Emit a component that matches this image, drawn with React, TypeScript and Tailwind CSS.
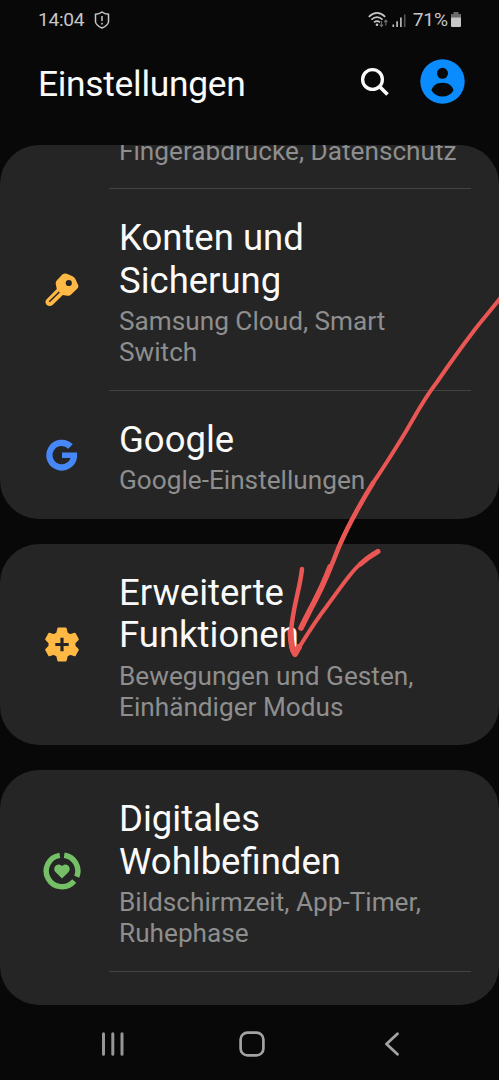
import type { ReactNode } from "react";

type RowProps = {
  icon?: ReactNode;
  title?: string[];
  summary: string[];
  divider?: boolean;
};

function KeyIcon() {
  return (
    <svg width="34" height="34" viewBox="0 0 34 34">
      <path
        fill="#ffb944"
        fillRule="evenodd"
        d="M17.6 1.3Q19.6-.1 21.8.7L27.500 3.300Q29.500 4.300 30.500 6.300L33 11.700Q34 14 32.400 15.600L26.400 21.300Q24.600 23.200 22.200 22.700L17.800 22.100L7.600 31.900C3.900 35.300-1.600 30.400 1.200 26.700L11.800 15.900L10.800 11.300Q10.300 9 11.900 7.200ZM23.800 6.900a3.100 3.100 0 1 0 0 6.200a3.100 3.100 0 1 0 0-6.200Z"
      />
      <path d="M14.300 19L4.300 28.800" stroke="#252525" strokeWidth="1.500" />
    </svg>
  );
}

function GoogleIcon() {
  return (
    <svg width="32" height="32" viewBox="0 0 32 32" fill="none" stroke="#4788f8" strokeWidth="6.300">
      <path d="M24.500 7.500A12.300 12.300 0 1 0 28 17.200" />
      <path d="M16 16.200H31.100" strokeWidth="5.600" />
    </svg>
  );
}

function GearPlusIcon() {
  return (
    <svg width="34" height="35" viewBox="0 0 34 35">
      <path
        fill="#ffb944"
        stroke="#ffb944"
        strokeWidth="2"
        strokeLinejoin="round"
        d="M13.400 1.500h7.200l1.200 4.800l3.300 1.900l4.700-1.400l3 5.500l-3.300 3.400v3.600l3.300 3.400l-3 5.500l-4.700-1.400l-3.300 1.900l-1.200 4.800h-7.200l-1.200-4.800l-3.300-1.900l-4.700 1.400l-3-5.500l3.300-3.400v-3.600l-3.300-3.400l3-5.500l4.700 1.400l3.300-1.900Z"
      />
      <path d="M17 10.800v13.400M10.300 17.500h13.400" stroke="#252525" strokeWidth="3.200" />
    </svg>
  );
}

function WellbeingIcon() {
  return (
    <svg width="38" height="38" viewBox="0 0 38 38" fill="none">
      <path
        d="M16.800 3.300A15.800 15.800 0 1 0 31.200 29M21.200 3.300A15.800 15.800 0 0 1 33.800 24.700"
        stroke="#75bf66"
        strokeWidth="5.400"
      />
      <path
        fill="#75bf66"
        d="M19 26.600L12.400 20C8.800 15.700 14.500 9.700 19 14.200C23.500 9.700 29.200 15.700 25.600 20Z"
      />
    </svg>
  );
}

function Row({ icon, title = [], summary, divider }: RowProps) {
  return (
    <div>
      <div className="flex items-center">
        <div className="flex w-[119px] shrink-0 justify-center pl-[5px]">{icon}</div>
        <div className="pt-7 pb-[22.5px] whitespace-nowrap">
          {title.length > 0 && (
            <h2 className="mb-1 text-[36.5px] leading-[42.5px] text-[#fafafa]">
              {title.map((line) => (
                <span key={line} className="block">{line}</span>
              ))}
            </h2>
          )}
          <p className="text-[26.2px] leading-[31px] text-[#8e8e8e]">
            {summary.map((line) => (
              <span key={line} className="block">{line}</span>
            ))}
          </p>
        </div>
      </div>
      {divider && <div className="mr-7 -mt-px ml-[109px] h-px bg-[#434343]" />}
    </div>
  );
}

function Card({ children }: { children: ReactNode }) {
  return <section className="shrink-0 overflow-hidden rounded-[39px] bg-[#252525]">{children}</section>;
}

function StatusBar() {
  return (
    <div className="flex h-10 items-center justify-between px-[38px] text-[19.2px] text-[#c6c6c6]">
      <div className="flex items-center gap-[10px]">
        <span className="tracking-[-0.3px]">14:04</span>
        <svg width="16" height="18" viewBox="0 0 16 18" fill="none" stroke="currentColor" strokeWidth="1.500">
          <path d="M8 1C6 2.500 3.800 3.100 1.500 3.300V11C2 14 5 15.700 8 17C11 15.700 14 14 14.500 11V3.300C12.200 3.100 10 2.500 8 1Z" />
          <path d="M8 5v5M8 11.800v1.700" />
        </svg>
      </div>
      <div className="flex items-center">
        <svg width="38" height="18" viewBox="0 0 38 18" fill="none" stroke="currentColor" strokeWidth="1.600">
          <path d="M.8 5.800Q9-1.900 17.200 5.800M3.400 8.700Q9 3.600 14.600 8.700M6 11.300Q9 8.800 12 11.300" />
          <circle cx="9" cy="13.800" r="1.300" fill="currentColor" stroke="none" />
          <path d="M13.500 10v5.500M11.900 13.700l1.600 1.800l1.600-1.800M17.800 14.500V9.300M16.200 11l1.600-1.800l1.600 1.800" stroke="#6b6b6b" strokeWidth="1.200" />
          <path d="M25.300 13.500V16M29.100 10.300V16M32.900 6.500V16" />
          <path d="M36.700 3.500V16" stroke="#555" />
        </svg>
        <span className="ml-[7px] tracking-[-0.1px]">71%</span>
        <svg className="ml-[3px]" width="10" height="16" viewBox="0 0 10 16">
          <path fill="#6b6b6b" d="M2.500 0h5v2H10v5H0V2h2.500Z" />
          <path fill="#c6c6c6" d="M0 5.500h10V14q0 1-1 1H1q-1 0-1-1Z" />
        </svg>
      </div>
    </div>
  );
}

function Header() {
  return (
    <header className="flex h-[104.5px] items-start pr-[34px] pl-[38px]">
      <h1 className="mt-[23px] grow text-[35.4px] leading-[42px] tracking-[-0.3px] text-[#fafafa]">
        Einstellungen
      </h1>
      <svg className="mt-[27px]" width="30" height="30" viewBox="0 0 30 30" fill="none" stroke="#fafafa">
        <circle cx="12.500" cy="12.500" r="9.900" strokeWidth="3.300" />
        <path d="M19.500 19.500L27.500 27.500" strokeWidth="3.800" />
      </svg>
      <svg className="mt-[19px] ml-[30px]" width="45" height="45" viewBox="0 0 45 45" fill="#080808">
        <circle cx="22.500" cy="22.500" r="22.200" fill="#0a8cff" />
        <circle cx="22.500" cy="14.300" r="5.500" />
        <path d="M11.500 31.500C12.500 26.500 17 23.800 22.500 23.800S32.500 26.500 33.500 31.500C31 35.500 27 37.600 22.500 37.600S14 35.500 11.500 31.500Z" />
      </svg>
    </header>
  );
}

function NavBar() {
  return (
    <nav className="flex h-[75px] shrink-0 items-center pt-0.5 pl-[101px]">
      <svg width="24" height="24" viewBox="0 0 24 24" stroke="#969696" strokeWidth="3" strokeLinecap="round">
        <path d="M2.500 1.800V22.200M11.800 1.800V22.200M21 1.800V22.200" />
      </svg>
      <svg className="ml-[114px]" width="26" height="26" viewBox="0 0 26 26" fill="none" stroke="#a3a3a3" strokeWidth="2.700">
        <rect x="1.600" y="1.600" width="22.800" height="22.800" rx="7" />
      </svg>
      <svg className="ml-[119px]" width="16" height="24" viewBox="0 0 16 24" fill="none" stroke="#a3a3a3" strokeWidth="2.800" strokeLinecap="round" strokeLinejoin="round">
        <path d="M13.500 1.800L2.500 12L13.500 22.200" />
      </svg>
    </nav>
  );
}

// Hand-drawn arrow lying over the list
function Arrow() {
  return (
    <svg
      className="pointer-events-none absolute inset-0"
      width="499"
      height="1080"
      viewBox="0 0 499 1080"
      fill="none"
      stroke="#e95653"
      strokeLinecap="round"
      strokeLinejoin="round"
    >
      <path d="M502 296C492 309 482 320 473 332C460 349 448 366 437 382C423 400 414 418 405 433C394 451 384 467 373 483C357 509 347 528 340 544" strokeWidth="4" />
      <path d="M373 483C357 509 347 528 338 549C332 565 325 581 316 598C310 611 304 620 301 628" strokeWidth="4.600" />
      <path d="M330 567C324 583 316 599 310 610L301 628" strokeWidth="5.600" />
      <path d="M302 569C300 589 292 610 291 633C290 643 291 650 295 654" strokeWidth="4.500" />
      <path d="M290.500 632C291 643 292 650 295 654L299 647" strokeWidth="6" />
      <path d="M295 654C302 643 313 624 327 606C345 581 354 568 366 559C370 556 374 553 378 551" strokeWidth="4" />
      <path d="M360 564.500C366 559 371 555.500 378 551.500" strokeWidth="5" />
    </svg>
  );
}

export default function App() {
  return (
    <div className="relative flex h-[1080px] w-[499px] flex-col overflow-hidden bg-[#080808] font-[Roboto,sans-serif]">
      <StatusBar />
      <Header />
      <main className="flex h-[860.5px] shrink-0 flex-col gap-[25px]">
        <Card>
          <div className="-mt-[37px]">
            <Row summary={["Fingerabdrücke, Datenschutz"]} divider />
          </div>
          <Row
            icon={<KeyIcon />}
            title={["Konten und", "Sicherung"]}
            summary={["Samsung Cloud, Smart", "Switch"]}
            divider
          />
          <Row icon={<GoogleIcon />} title={["Google"]} summary={["Google-Einstellungen"]} />
        </Card>
        <Card>
          <Row
            icon={<GearPlusIcon />}
            title={["Erweiterte", "Funktionen"]}
            summary={["Bewegungen und Gesten,", "Einhändiger Modus"]}
          />
        </Card>
        <Card>
          <Row
            icon={<WellbeingIcon />}
            title={["Digitales", "Wohlbefinden"]}
            summary={["Bildschirmzeit, App-Timer,", "Ruhephase"]}
            divider
          />
          <div className="h-[33.5px]" />
        </Card>
      </main>
      <NavBar />
      <Arrow />
    </div>
  );
}
